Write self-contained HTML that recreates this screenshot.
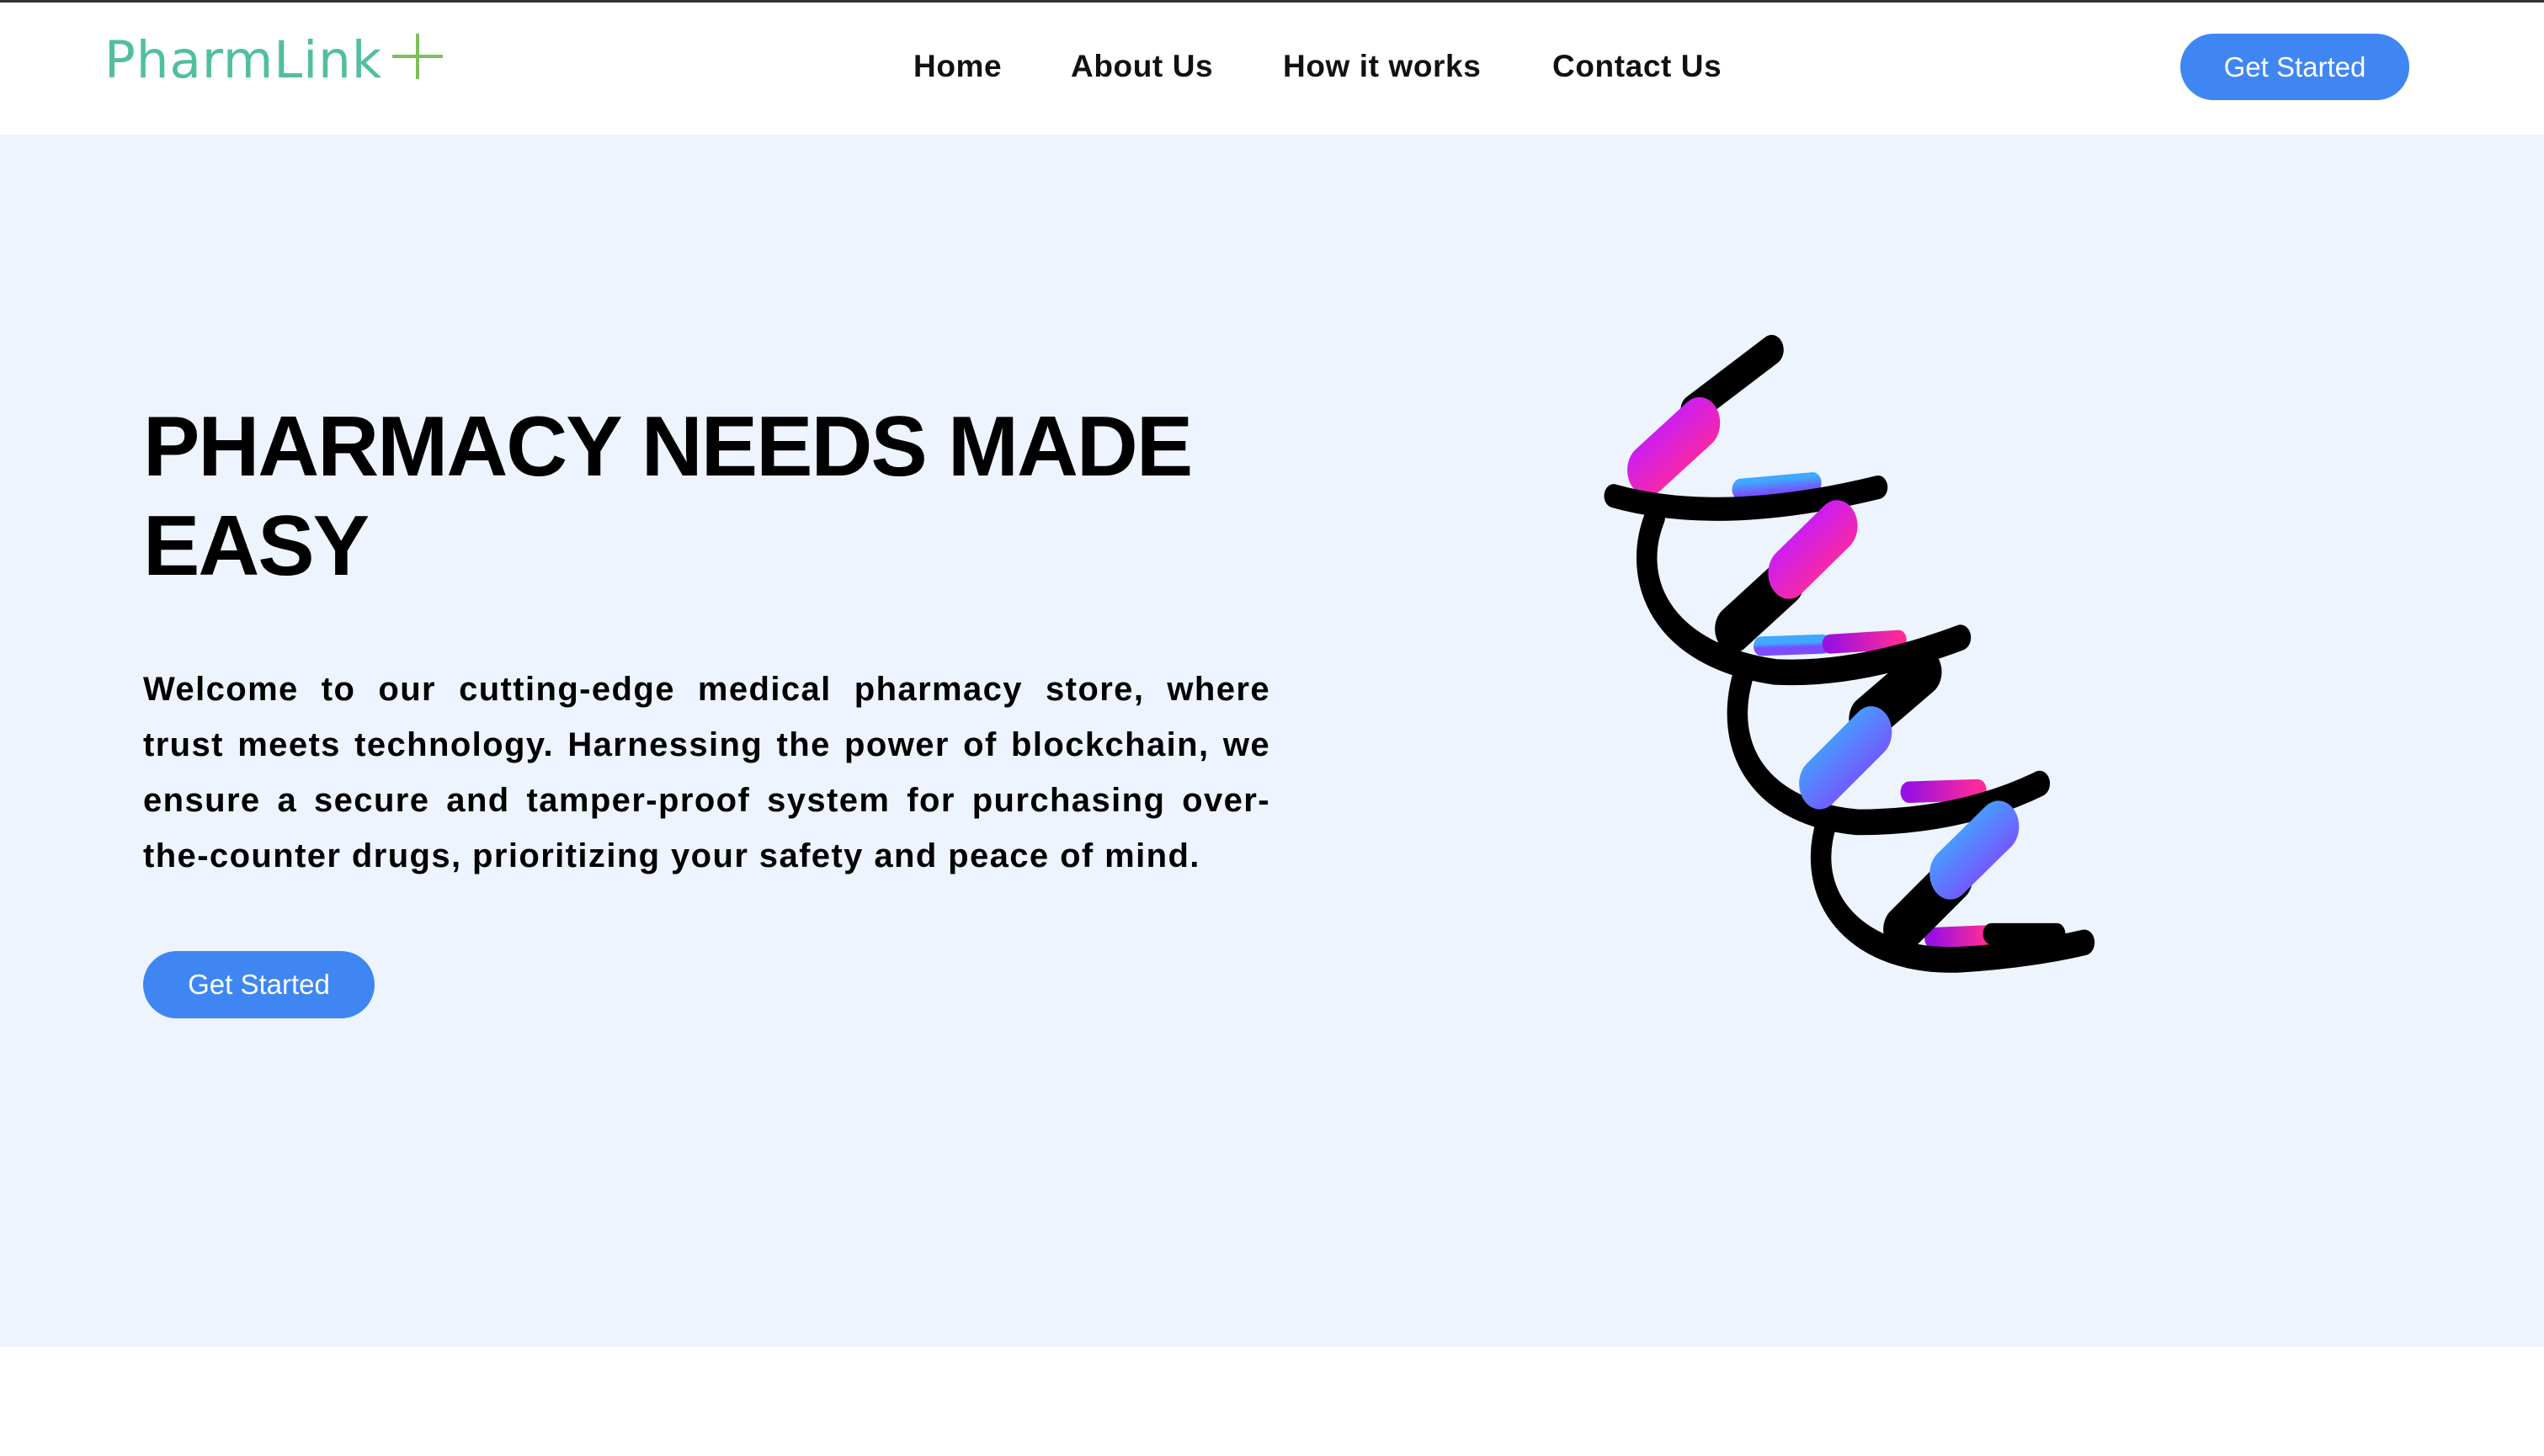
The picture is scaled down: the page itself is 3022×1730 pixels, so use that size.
<!DOCTYPE html>
<html><head><meta charset="utf-8"><style>
*{margin:0;padding:0;box-sizing:border-box}
html,body{width:3022px;height:1730px;overflow:hidden;background:#fff;font-family:"Liberation Sans",sans-serif}
.top{position:absolute;left:0;top:0;width:3022px;height:3px;background:#333}
.logo{position:absolute;left:124px;top:36px;font-family:"DejaVu Sans",sans-serif;font-size:61px;color:#52bea0;letter-spacing:1px}
.plus{position:absolute;left:466px;top:40px;width:60px;height:54px}
.plus:before{content:"";position:absolute;left:28px;top:0;width:4px;height:54px;background:#7dbf5a}
.plus:after{content:"";position:absolute;left:0;top:25px;width:60px;height:4px;background:#7dbf5a}
.nav a{position:absolute;top:58px;font-size:37px;font-weight:bold;color:#111;text-decoration:none;letter-spacing:0.6px}
.btn{position:absolute;background:#3f86f2;color:#fff;border-radius:40px;font-size:33px;display:flex;align-items:center;justify-content:center}
.hero{position:absolute;left:0;top:160px;width:3022px;height:1440px;background:#edf4fe}
h1{position:absolute;left:170px;top:472px;font-size:101px;line-height:118px;font-weight:900;color:#000;letter-spacing:-2px;width:1500px}
p{position:absolute;left:170px;top:786px;width:1339px;font-size:40px;line-height:66px;font-weight:bold;color:#000;letter-spacing:1.4px}
p span{display:block;white-space:nowrap;text-align:justify;text-align-last:justify}
p span.l{text-align-last:left}
</style></head><body>
<div class="top"></div>
<div class="logo">PharmLink</div><div class="plus"></div>
<div class="nav">
<a style="left:1085px">Home</a>
<a style="left:1272px">About Us</a>
<a style="left:1524px">How it works</a>
<a style="left:1844px">Contact Us</a>
</div>
<div class="btn" style="left:2590px;top:40px;width:272px;height:79px">Get Started</div>
<div class="hero"></div>
<h1>PHARMACY NEEDS MADE<br>EASY</h1>
<p><span>Welcome to our cutting-edge medical pharmacy store, where</span><span>trust meets technology. Harnessing the power of blockchain, we</span><span>ensure a secure and tamper-proof system for purchasing over-</span><span class="l">the-counter drugs, prioritizing your safety and peace of mind.</span></p>
<div class="btn" style="left:170px;top:1130px;width:275px;height:80px">Get Started</div>
<svg style="position:absolute;left:1880px;top:380px" width="640" height="800" viewBox="0 0 1568 1568" preserveAspectRatio="none">
<defs>
<linearGradient id="pk" x1="0" y1="0" x2="1" y2="1"><stop offset="0" stop-color="#c21cff"/><stop offset="1" stop-color="#ff2a9a"/></linearGradient>
<linearGradient id="bl" x1="0" y1="0" x2="1" y2="1"><stop offset="0" stop-color="#3fa8ff"/><stop offset="1" stop-color="#7a4dff"/></linearGradient>
<linearGradient id="mg" x1="0" y1="0" x2="1" y2="0"><stop offset="0" stop-color="#9a10e0"/><stop offset="1" stop-color="#ff2a9a"/></linearGradient>
</defs>
<g fill="none" stroke-linecap="round">
<path d="M320,210 L550,70" stroke="#000" stroke-width="70"/>
<path d="M190,350 L340,240" stroke="url(#pk)" stroke-width="120"/>
<path d="M460,395 L670,380" stroke="url(#bl)" stroke-width="50"/>
<path d="M520,760 L700,755" stroke="url(#bl)" stroke-width="45"/>
<path d="M720,755 L920,745" stroke="url(#mg)" stroke-width="45"/>
<path d="M950,1100 L1150,1095" stroke="url(#mg)" stroke-width="50"/>
<path d="M1020,1440 L1170,1435" stroke="url(#mg)" stroke-width="50"/>
<path d="M1190,1430 L1380,1430" stroke="#000" stroke-width="50"/>
<path d="M90,410 Q400,480 860,390" stroke="#000" stroke-width="55"/>
<path d="M210,460 C140,600 220,780 560,820 Q800,830 1100,740" stroke="#000" stroke-width="60"/>
<path d="M470,820 C400,1000 520,1150 800,1170 Q1100,1170 1330,1080" stroke="#000" stroke-width="60"/>
<path d="M710,1170 C640,1350 800,1500 1100,1490 Q1300,1480 1460,1450" stroke="#000" stroke-width="60"/>
<path d="M440,720 L590,610" stroke="#000" stroke-width="110"/>
<path d="M600,590 L740,480" stroke="url(#pk)" stroke-width="120"/>
<path d="M830,930 L990,820" stroke="#000" stroke-width="110"/>
<path d="M690,1080 L840,960" stroke="url(#bl)" stroke-width="120"/>
<path d="M930,1420 L1080,1300" stroke="#000" stroke-width="110"/>
<path d="M1070,1290 L1210,1180" stroke="url(#bl)" stroke-width="120"/>
</g>
</svg>
</body></html>
